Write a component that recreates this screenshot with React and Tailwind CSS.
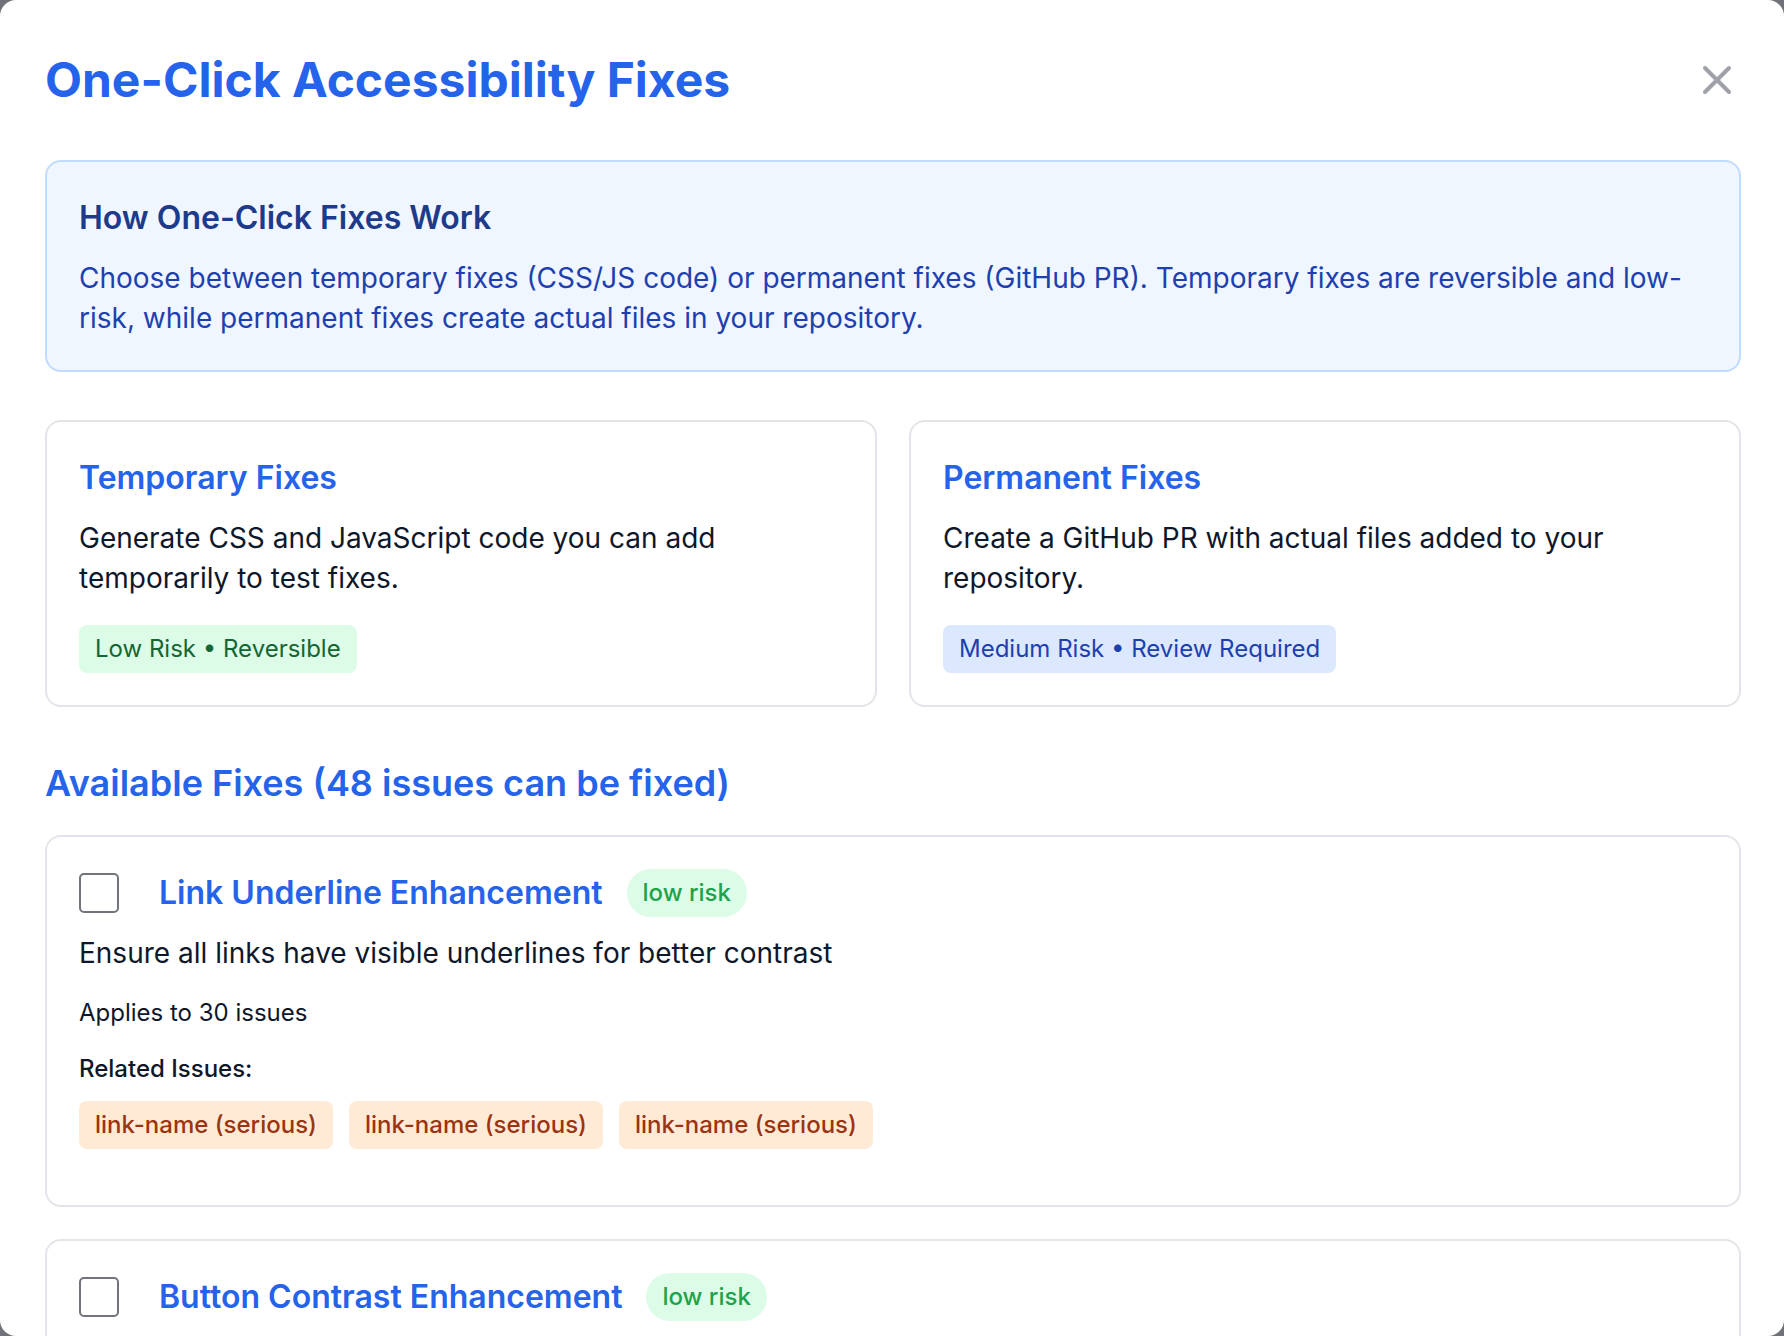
import React, { useState } from 'react';
import { X } from 'lucide-react';

const options = [
  {
    title: 'Temporary Fixes',
    description: 'Generate CSS and JavaScript code you can add temporarily to test fixes.',
    tag: 'Low Risk • Reversible',
    tagClass: 'bg-[#dcfce7] text-[#166534]',
  },
  {
    title: 'Permanent Fixes',
    description: 'Create a GitHub PR with actual files added to your repository.',
    tag: 'Medium Risk • Review Required',
    tagClass: 'bg-[#dbe8fe] text-[#1e40af]',
  },
];

const fixes = [
  {
    id: 'link-underline',
    title: 'Link Underline Enhancement',
    risk: 'low risk',
    description: 'Ensure all links have visible underlines for better contrast',
    issueCount: 30,
    related: ['link-name (serious)', 'link-name (serious)', 'link-name (serious)'],
  },
  {
    id: 'button-contrast',
    title: 'Button Contrast Enhancement',
    risk: 'low risk',
  },
];

function OptionCard({ option }) {
  return (
    <div className="rounded-2xl border-2 border-[#e4e5eb] p-8">
      <h3 className="mb-4 text-[32px] leading-[48px] font-semibold text-[#2563eb]">{option.title}</h3>
      <p className="text-[28px] leading-[40px] text-[#0f172a]">{option.description}</p>
      <span className={`mt-[27px] block w-fit rounded-lg px-4 py-2 text-2xl leading-8 ${option.tagClass}`}>
        {option.tag}
      </span>
    </div>
  );
}

function FixCard({ fix, checked, onToggle }) {
  return (
    <div className="rounded-2xl border-2 border-[#e4e5eb] p-8">
      <div className="flex items-center">
        <input
          id={fix.id}
          type="checkbox"
          checked={checked}
          onChange={() => onToggle(fix.id)}
          className="mr-10 size-10 shrink-0 appearance-none rounded-[5px] border-2 border-[#72747c] bg-white checked:bg-[#2563eb]"
        />
        <label htmlFor={fix.id} className="text-[32px] leading-[48px] font-semibold text-[#2563eb]">
          {fix.title}
        </label>
        <span className="ml-6 rounded-full bg-[#dcfce7] px-4 py-2 text-2xl leading-8 font-medium text-[#20a24c]">
          {fix.risk}
        </span>
      </div>
      {fix.description && (
        <p className="mt-4 text-[28px] leading-[40px] text-[#0f172a]">{fix.description}</p>
      )}
      {fix.issueCount && (
        <p className="mt-6 text-2xl leading-8 text-[#0f172a]">Applies to {fix.issueCount} issues</p>
      )}
      {fix.related && (
        <div className="mt-6 mb-6">
          <p className="mb-4 text-2xl leading-8 font-medium text-[#0f172a]">Related Issues:</p>
          <ul className="flex flex-wrap gap-4">
            {fix.related.map((issue, i) => (
              <li key={i} className="rounded-lg bg-[#ffebd5] px-4 py-2 text-2xl leading-8 font-medium text-[#9a3412]">
                {issue}
              </li>
            ))}
          </ul>
        </div>
      )}
    </div>
  );
}

export default function App() {
  const [selected, setSelected] = useState([]);

  const toggle = (id) => {
    setSelected((prev) => (prev.includes(id) ? prev.filter((x) => x !== id) : [...prev, id]));
  };

  return (
    <div className="h-screen bg-[#71717a] font-['Inter',sans-serif]">
      <div
        role="dialog"
        aria-labelledby="fixes-title"
        className="h-full overflow-y-auto rounded-2xl bg-white py-12 pr-[43px] pl-[45px] [scrollbar-width:none]"
      >
        <div className="mb-12 flex items-center justify-between">
          <h1 id="fixes-title" className="text-5xl leading-[64px] font-bold text-[#2563eb]">
            One-Click Accessibility Fixes
          </h1>
          <button type="button" aria-label="Close" className="text-[#a0a2aa] hover:text-[#4b5563]">
            <X className="size-12" />
          </button>
        </div>

        <div className="mb-12 rounded-2xl border-2 border-[#bfdbfe] bg-[#eff6ff] p-8">
          <h2 className="mb-4 text-[32px] leading-[48px] font-semibold text-[#1e3a8a]">How One-Click Fixes Work</h2>
          <p className="text-[28px] leading-[40px] text-[#1e40af]">
            Choose between temporary fixes (CSS/JS code) or permanent fixes (GitHub PR). Temporary fixes are
            reversible and low-risk, while permanent fixes create actual files in your repository.
          </p>
        </div>

        <div className="mb-12 grid grid-cols-2 gap-8">
          {options.map((option) => (
            <OptionCard key={option.title} option={option} />
          ))}
        </div>

        <h2 className="mb-6 text-4xl leading-[56px] font-semibold text-[#2563eb]">
          Available Fixes (48 issues can be fixed)
        </h2>
        <div className="flex flex-col gap-8">
          {fixes.map((fix) => (
            <FixCard key={fix.id} fix={fix} checked={selected.includes(fix.id)} onToggle={toggle} />
          ))}
        </div>
      </div>
    </div>
  );
}
